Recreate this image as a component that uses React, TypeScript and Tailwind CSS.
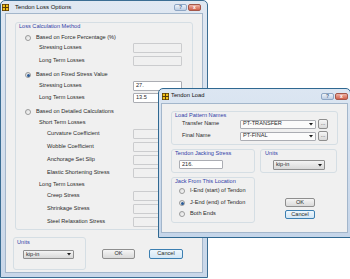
import React from 'react';

const FONT = "font-['Liberation_Sans',Arial,sans-serif]";

function AppIcon() {
  return (
    <svg width="7" height="7" viewBox="0 0 7 7" className="shrink-0">
      <rect x="0" y="0" width="7" height="7" fill="#5a3d08" />
      <rect x="0.8" y="0.8" width="2.2" height="2.2" fill="#f2c21b" />
      <rect x="4" y="0.8" width="2.2" height="2.2" fill="#f2c21b" />
      <rect x="0.8" y="4" width="2.2" height="2.2" fill="#f2c21b" />
      <rect x="4" y="4" width="2.2" height="2.2" fill="#f2c21b" />
    </svg>
  );
}

function TitleButtons() {
  return (
    <div className="ml-auto flex gap-[1px]">
      <div className="h-[7px] w-[13px] rounded-[2px] border border-[#8ea6c4] bg-linear-to-b from-[#eef3f9] to-[#bccde3] flex items-center justify-center text-[5px] leading-none font-bold text-[#4a6488]">?</div>
      <div className="h-[7px] w-[13px] rounded-[2px] border border-[#a4574a] bg-linear-to-b from-[#eeb3a6] to-[#d0604c] flex items-center justify-center text-[5px] leading-none font-bold text-white">x</div>
    </div>
  );
}

function Radio({ checked }: { checked?: boolean }) {
  return (
    <span className="w-[6px] h-[6px] rounded-full border border-[#9a9b9b] bg-linear-to-br from-[#dcdcdc] to-[#fbfbfb] flex items-center justify-center shrink-0">
      {checked && <span className="w-[3px] h-[3px] rounded-full bg-[#2a5a96]" />}
    </span>
  );
}

function TextBox({ value, disabled, w = 'w-[49px]', h = 'h-[10px]' }: { value?: string; disabled?: boolean; w?: string; h?: string }) {
  return (
    <div className={`${w} ${h} rounded-[1px] border ${disabled ? 'border-[#cbccce] bg-[#f0f0f0]' : 'border-[#abadb3] bg-white'} flex items-center px-[2px] shrink-0`}>
      {value}
    </div>
  );
}

function Combo({ value, w, h = 'h-[9px]', white }: { value: string; w: string; h?: string; white?: boolean }) {
  return (
    <div className={`${w} ${h} rounded-[1px] border ${white ? 'border-[#abadb3] bg-[#fbfbfb]' : 'border-[#8e8e8e] bg-linear-to-b from-[#f3f3f3] to-[#d8d8d8]'} flex items-center justify-between pl-[2px] pr-[2px] shrink-0`}>
      <span>{value}</span>
      <svg width="4" height="3" viewBox="0 0 4 3"><path d="M0 0H4L2 2.5Z" fill="#1a1a1a" /></svg>
    </div>
  );
}

function Button({ label, w, h = 'h-[10px]', focus }: { label: string; w: string; h?: string; focus?: boolean }) {
  return (
    <div className={`${w} ${h} rounded-[2px] border ${focus ? 'border-[#3c7fb1] bg-linear-to-b from-[#eef7fd] to-[#d3e7f6]' : 'border-[#8e8e8e] bg-linear-to-b from-[#f5f5f5] to-[#dadada]'} flex items-center justify-center shrink-0`}>
      {label}
    </div>
  );
}

function GroupLabel({ children, className = '' }: { children: React.ReactNode; className?: string }) {
  return <div className={`text-[#3040a8] leading-none flex items-center ${className}`}>{children}</div>;
}

function FieldRow({ label, indent, mt, value, disabled }: { label: string; indent: string; mt: string; value?: string; disabled?: boolean }) {
  return (
    <div className={`flex items-center h-[10px] ${mt}`}>
      <span className={`${indent} w-[117px] shrink-0`}>{label}</span>
      <TextBox value={value} disabled={disabled} />
    </div>
  );
}

function RadioRow({ label, checked, mt }: { label: string; checked?: boolean; mt: string }) {
  return (
    <div className={`flex items-center h-[10px] ${mt}`}>
      <span className="ml-[9px]"><Radio checked={checked} /></span>
      <span className="ml-[5px]">{label}</span>
    </div>
  );
}

function LossOptions() {
  return (
    <div className="absolute left-0 top-0 w-[208px] h-[278px] rounded-t-[5px] border border-[#3b6d93] bg-linear-to-b from-[#e0e8f2] to-[#c9d7e9] flex flex-col">
      <div className="h-[12px] flex items-center pl-[1px] pr-[6px] shrink-0">
        <AppIcon />
        <span className="ml-[6px] text-[6px] text-[#111]">Tendon Loss Options</span>
        <TitleButtons />
      </div>
      <div className="mx-[4px] mb-[4px] flex-1 border border-[#a3b6cb] bg-[#f0f0f0] flex flex-col">
        <div className="ml-[9px] mt-[8px] w-[178px] h-[208px] border border-[#d5dee4] rounded-[3px] flex flex-col">
          <GroupLabel className="h-[7px] pl-[3px]">Loss Calculation Method</GroupLabel>
          <RadioRow label="Based on Force Percentage (%)" mt="mt-[3px]" />
          <FieldRow label="Stressing Losses" indent="pl-[23px]" mt="mt-0" disabled />
          <FieldRow label="Long Term Losses" indent="pl-[23px]" mt="mt-[3px]" disabled />
          <RadioRow label="Based on Fixed Stress Value" checked mt="mt-[4px]" />
          <FieldRow label="Stressing Losses" indent="pl-[23px]" mt="mt-[1px]" value="27." />
          <FieldRow label="Long Term Losses" indent="pl-[23px]" mt="mt-[2px]" value="13.5" />
          <RadioRow label="Based on Detailed Calculations" mt="mt-[4px]" />
          <div className="flex items-center h-[10px] mt-[1px] pl-[23px]">Short Term Losses</div>
          <FieldRow label="Curvature Coefficient" indent="pl-[31px]" mt="mt-[1px]" disabled />
          <FieldRow label="Wobble Coefficient" indent="pl-[31px]" mt="mt-[3px]" disabled />
          <FieldRow label="Anchorage Set Slip" indent="pl-[31px]" mt="mt-[3px]" disabled />
          <FieldRow label="Elastic Shortening Stress" indent="pl-[31px]" mt="mt-[3px]" disabled />
          <div className="flex items-center h-[10px] mt-[2px] pl-[23px]">Long Term Losses</div>
          <FieldRow label="Creep Stress" indent="pl-[31px]" mt="mt-[1px]" disabled />
          <FieldRow label="Shrinkage Stress" indent="pl-[31px]" mt="mt-[3px]" disabled />
          <FieldRow label="Steel Relaxation Stress" indent="pl-[31px]" mt="mt-[3px]" disabled />
        </div>
        <div className="flex items-start mt-[7px]">
          <div className="ml-[7px] w-[73px] h-[33px] border border-[#d5dee4] rounded-[3px] flex flex-col">
            <GroupLabel className="h-[7px] pl-[3px] mt-[1px]">Units</GroupLabel>
            <div className="ml-[9px] mt-[4px]"><Combo value="kip-in" w="w-[51px]" /></div>
          </div>
          <div className="ml-[16px] mt-[12px]"><Button label="OK" w="w-[33px]" /></div>
          <div className="ml-[14px] mt-[12px]"><Button label="Cancel" w="w-[34px]" focus /></div>
        </div>
      </div>
    </div>
  );
}

function TendonLoad() {
  return (
    <div className="absolute left-[158px] top-[88px] w-[193px] h-[150px] rounded-t-[5px] border border-[#2f6891] bg-linear-to-b from-[#dce6f2] to-[#c5d5e9] flex flex-col">
      <div className="h-[14px] flex items-center pl-[3px] pr-[2px] shrink-0">
        <AppIcon />
        <span className="ml-[2px] text-[5.8px] text-[#111]">Tendon Load</span>
        <TitleButtons />
      </div>
      <div className="mx-[2px] mb-[4px] flex-1 border border-[#a3b6cb] bg-[#f0f0f0] flex flex-col">
        <div className="ml-[9px] mt-[7px] w-[167px] h-[34px] border border-[#d5dee4] rounded-[3px] flex flex-col">
          <GroupLabel className="h-[5px] pl-[3px] mt-[1px]">Load Pattern Names</GroupLabel>
          <div className="flex items-center h-[10px] mt-[1px]">
            <span className="pl-[10px] w-[68px] shrink-0">Transfer Name</span>
            <Combo value="PT-TRANSFER" w="w-[76px]" white />
            <div className="ml-[2px]"><Button label="..." w="w-[10px]" /></div>
          </div>
          <div className="flex items-center h-[10px] mt-[2px]">
            <span className="pl-[10px] w-[68px] shrink-0">Final Name</span>
            <Combo value="PT-FINAL" w="w-[76px]" white />
            <div className="ml-[2px]"><Button label="..." w="w-[10px]" /></div>
          </div>
        </div>
        <div className="flex mt-[4px]">
          <div className="ml-[9px] w-[84px] h-[24px] border border-[#d5dee4] rounded-[3px] flex flex-col">
            <GroupLabel className="h-[5px] pl-[3px] mt-[1px]">Tendon Jacking Stress</GroupLabel>
            <div className="ml-[7px] mt-[4px]"><TextBox value="216." w="w-[44px]" h="h-[9px]" /></div>
          </div>
          <div className="ml-[5px] w-[77px] h-[24px] border border-[#d5dee4] rounded-[3px] flex flex-col">
            <GroupLabel className="h-[5px] pl-[4px] mt-[1px]">Units</GroupLabel>
            <div className="ml-[12px] mt-[4px]"><Combo value="kip-in" w="w-[52px]" h="h-[10px]" /></div>
          </div>
        </div>
        <div className="flex mt-[4px]">
          <div className="ml-[9px] w-[84px] h-[46px] border border-[#d5dee4] rounded-[3px] flex flex-col">
            <GroupLabel className="h-[5px] pl-[3px] mt-[1px]">Jack From This Location</GroupLabel>
            {[
              { t: 'I-End (start) of Tendon', mt: 'mt-[3px]', c: false },
              { t: 'J-End (end) of Tendon', mt: 'mt-[4px]', c: true },
              { t: 'Both Ends', mt: 'mt-[3px]', c: false },
            ].map(r => (
              <div key={r.t} className={`flex items-center h-[8px] ${r.mt}`}>
                <span className="ml-[7px]"><Radio checked={r.c} /></span>
                <span className="ml-[5px]">{r.t}</span>
              </div>
            ))}
          </div>
          <div className="ml-[30px] mt-[21px] flex flex-col gap-[3px]">
            <Button label="OK" w="w-[30px]" h="h-[9px]" />
            <Button label="Cancel" w="w-[30px]" h="h-[9px]" focus />
          </div>
        </div>
      </div>
    </div>
  );
}

export default function App() {
  return (
    <div className={`relative w-[350px] h-[279px] bg-white overflow-hidden text-[5.6px] leading-none text-[#2a2a2a] ${FONT}`}>
      <LossOptions />
      <TendonLoad />
    </div>
  );
}
